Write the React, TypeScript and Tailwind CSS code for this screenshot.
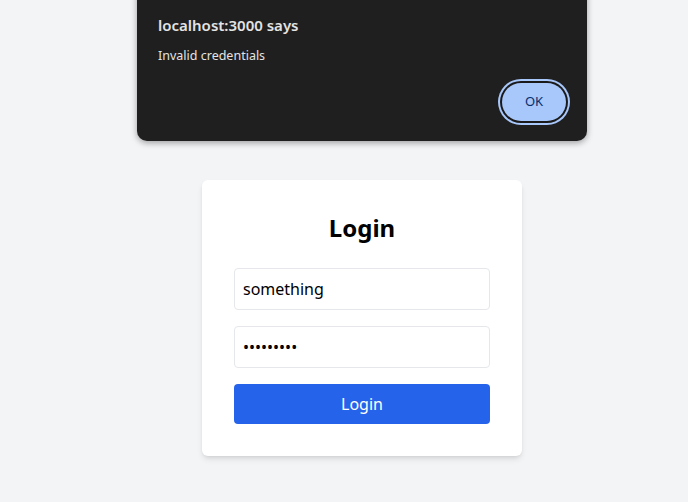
import { useState } from "react";

const font = { fontFamily: '"Segoe UI", "Noto Sans", sans-serif' };

export default function App() {
	const [username, setUsername] = useState("something");
	const [password, setPassword] = useState("something");

	return (
		<div
			className="relative min-h-screen w-full overflow-hidden bg-gray-100"
			style={font}
		>
			{/* alert dialog */}
			<div className="absolute left-[137px] top-[-20px] w-[450px] rounded-[10px] bg-[#1f1f1f] px-[21px] pb-[20px] pt-[35px] shadow-[0_2px_6px_rgba(0,0,0,0.35)]">
				<div className="text-[15px] font-semibold leading-5 text-[#e3e3e3]">
					localhost:3000 says
				</div>
				<div className="mt-[13px] text-[12.5px] leading-4 text-[#e3e3e3]">
					Invalid credentials
				</div>
				<div className="mt-[19px] flex justify-end pr-0">
					<button
						type="button"
						className="h-[38px] w-[64px] rounded-full bg-[#a8c7fa] text-[13px] font-normal text-[#062e6f] ring-2 ring-[#a8c7fa] ring-offset-2 ring-offset-[#1a1a1a]"
					>
						OK
					</button>
				</div>
			</div>

			<div className="pl-[202px] pt-[180px]">
				<form
					className="w-[320px] rounded-md bg-white p-8 shadow-md"
					onSubmit={(e) => e.preventDefault()}
				>
					<h2 className="mb-6 text-center text-2xl font-bold text-black">
						Login
					</h2>
					<input
						type="text"
						value={username}
						onChange={(e) => setUsername(e.target.value)}
						className="mb-4 w-full rounded border border-gray-200 p-2 text-base text-black outline-none"
					/>
					<input
						type="password"
						value={password}
						onChange={(e) => setPassword(e.target.value)}
						className="mb-4 w-full rounded border border-gray-200 p-2 text-base text-black outline-none"
					/>
					<button
						type="submit"
						className="w-full rounded bg-[#2563eb] py-2 text-base text-white"
					>
						Login
					</button>
				</form>
			</div>
		</div>
	);
}
